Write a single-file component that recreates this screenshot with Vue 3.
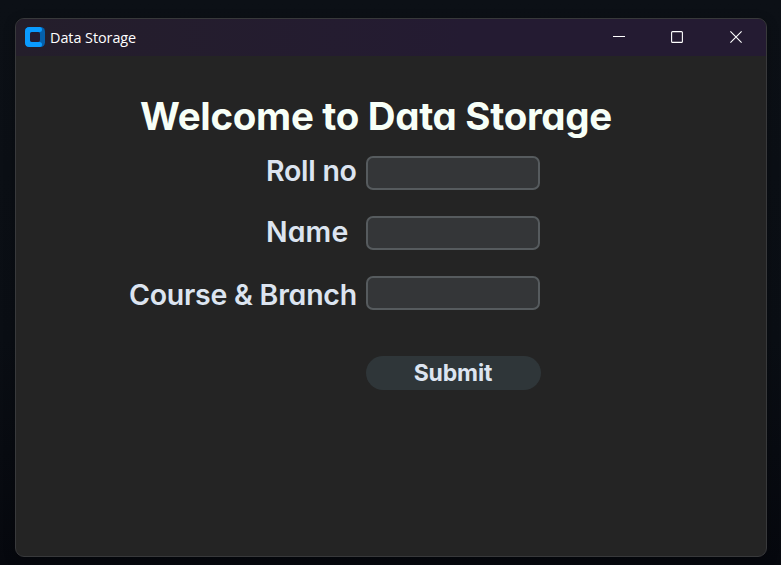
<script setup>
import { reactive } from 'vue'

const form = reactive({ roll: '', name: '', course: '' })
const fields = [
  { key: 'roll', label: 'Roll no' },
  { key: 'name', label: 'Name' },
  { key: 'course', label: 'Course & Branch' },
]
</script>

<template>
  <div class="desktop">
    <main class="window">
      <header class="titlebar">
        <svg class="logo" width="20" height="20" viewBox="0 0 20 20">
          <rect width="20" height="20" rx="4.5" fill="#0560ab" />
          <path d="M4.5 0H14.5Q17 0 17 2.5Q17 5 14.5 5H7Q5 5 5 7V13Q5 15 7 15H14.5Q17 15 17 17.5Q17 20 14.5 20H4.5Q0 20 0 15.5V4.5Q0 0 4.5 0Z" fill="#0a9bff" />
          <rect x="5" y="5" width="10" height="10" rx="2" fill="#241c30" />
        </svg>
        <span class="title">Data Storage</span>
        <div class="controls">
          <svg width="12" height="12" viewBox="0 0 12 12"><path d="M0 5.5H12" /></svg>
          <svg width="12" height="12" viewBox="0 0 12 12"><rect x=".6" y=".6" width="10.8" height="10.8" rx="1" /></svg>
          <svg width="12" height="12" viewBox="0 0 12 12"><path d="M.4 .4L11.6 11.6M11.6 .4L.4 11.6" /></svg>
        </div>
      </header>
      <form class="body" @submit.prevent>
        <h1>Welcome to Data Storage</h1>
        <div v-for="f in fields" :key="f.key" class="row">
          <label :for="f.key" :class="f.key"><span>{{ f.label }}</span></label>
          <input :id="f.key" v-model="form[f.key]" type="text" />
        </div>
        <button type="submit"><span>Submit</span></button>
      </form>
    </main>
  </div>
</template>

<style>
body { background: #0a0d13; overflow: hidden; }
</style>

<style scoped>
.desktop {
  box-sizing: border-box;
  width: 781px;
  height: 565px;
  padding: 18px 14px 8px 15px;
  background: linear-gradient(#0c1016, #0a0e14 60%, #06080e);
}
.window {
  box-sizing: border-box;
  height: 539px;
  border: 1px solid #38393b;
  border-radius: 9px;
  overflow: hidden;
  background: #242424;
  box-shadow: 0 3px 12px rgba(0, 0, 0, .3);
}
.titlebar {
  display: flex;
  align-items: center;
  height: 37px;
  padding: 0 24px 0 9px;
  box-sizing: border-box;
  background: linear-gradient(90deg, #241e2b, #241b32 60%);
}
.logo { flex: none; margin-top: -2px; }
.title {
  margin-left: 5px;
  color: #fff;
  font: 14.4px/20px "Open Sans", sans-serif;
  letter-spacing: -.05px;
}
.controls {
  display: flex;
  gap: 46px;
  margin: 0 0 1px auto;
}
.controls svg { fill: none; stroke: #fff; stroke-width: 1.1; }
.controls svg:last-child { margin-left: 1px; }
.body {
  display: flex;
  flex-direction: column;
  font-family: Inter, sans-serif;
  font-feature-settings: "cv11";
  font-weight: 600;
}
h1 {
  margin: 36px 0 16px 124px;
  height: 48px;
  font-size: 38.5px;
  line-height: 48px;
  font-weight: 700;
  letter-spacing: -.32px;
  white-space: nowrap;
  color: #f7fff7;
}
.row {
  display: flex;
  height: 34px;
  margin: 0 0 26px 113px;
}
label {
  width: 237px;
  box-sizing: border-box;
  font-size: 28.5px;
  line-height: 34px;
  white-space: nowrap;
  letter-spacing: -.25px;
  color: #dce4f0;
}
.roll { padding: 0 0 0 137px; margin-top: -2px; }
.name { padding: 0 0 0 137px; margin-top: -1px; letter-spacing: .1px; }
.course { margin-top: 2px; }
input {
  box-sizing: border-box;
  width: 174px;
  height: 34px;
  padding: 0 8px;
  border: 2px solid #565b5e;
  border-radius: 7px;
  background: #343638;
  color: #dce4ee;
  font: 16px Inter, sans-serif;
  outline: none;
}
button {
  width: 175px;
  height: 34px;
  margin: 20px 0 0 350px;
  padding: 0 1px 0 0;
  border: 0;
  border-radius: 17px;
  background: #2f3639;
  color: #dce4f0;
  font: 700 23px/34px Inter, sans-serif;
  letter-spacing: -.15px;
}
</style>
